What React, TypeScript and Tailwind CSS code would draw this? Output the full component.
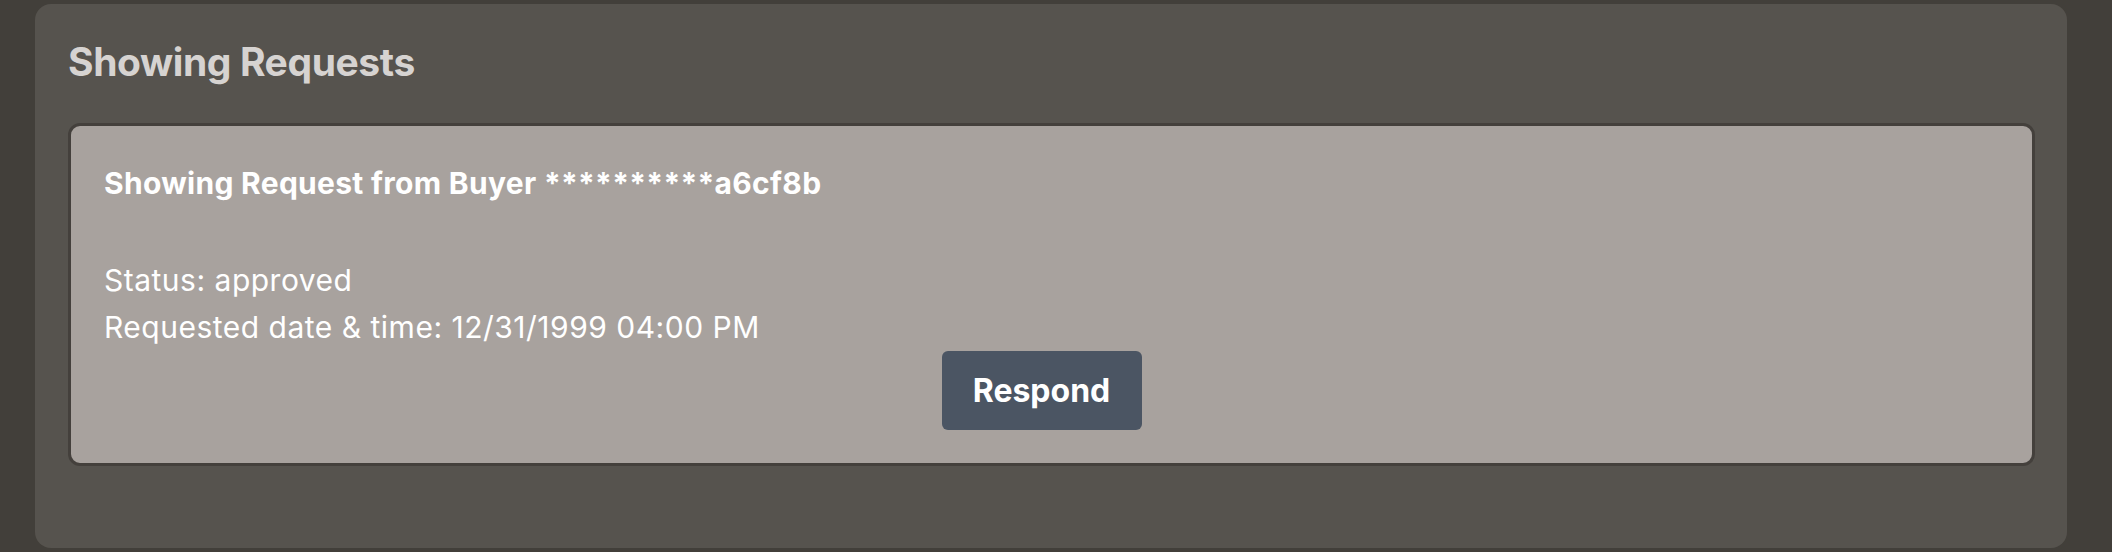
const request = {
	buyer: "**********a6cf8b",
	status: "approved",
	requestedAt: "12/31/1999 04:00 PM",
};

const App = () => {
	return (
		<div className="h-[552px] w-full bg-[#423f3a] pl-[35px] pr-[45px] pt-[4px] font-['Inter',_'Noto_Sans',_sans-serif]">
			<section className="h-[544px] rounded-[16px] bg-[#56534e] pl-[33px] pr-[32px] pt-[34px]">
				<h2 className="mb-[37px] text-[39px] font-bold leading-[48px] tracking-[-0.4px] text-[#d6d3d1]">
					Showing Requests
				</h2>

				<div className="rounded-[12px] border-[3px] border-[#44403c] bg-[#a8a29e] px-[33px] pb-[33px] pt-[33px] text-white">
					<h3 className="text-[30px] font-bold leading-[48px] tracking-[0.3px]">
						Showing Request from Buyer {request.buyer}
					</h3>
					<div className="mt-[50px] text-[30px] leading-[47px] tracking-[0.5px]">
						<p>Status: {request.status}</p>
						<p>Requested date &amp; time: {request.requestedAt}</p>
					</div>
					<div className="flex justify-center pr-[20px]">
						<button className="h-[79px] w-[200px] rounded-[6px] bg-[#4b5563] text-[32px] font-bold text-white">
							Respond
						</button>
					</div>
				</div>
			</section>
		</div>
	);
};

export default App;
